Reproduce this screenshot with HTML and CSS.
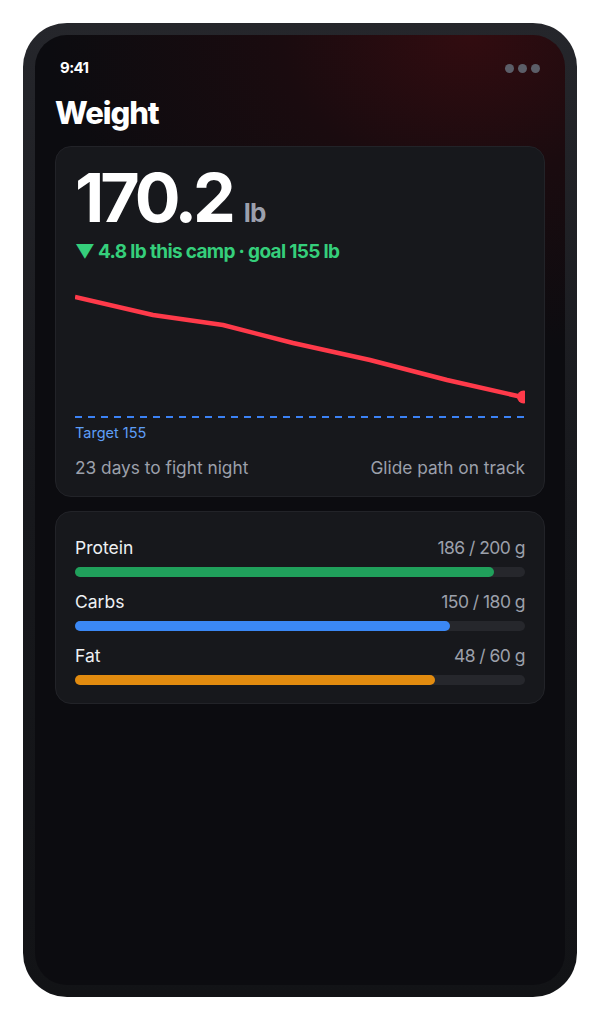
FILE: index.html
```html
<!DOCTYPE html>
<html lang="en">
  <head>
    <meta charset="UTF-8" />
    <meta name="viewport" content="width=device-width, initial-scale=1.0" />
    <title>Weight</title>
    <link rel="stylesheet" href="styles.css">
  </head>
  <body>
    <div class="phone">
      <div class="screen">
        <div class="status">
          <span class="time">9:41</span>
          <span class="dots"><i></i><i></i><i></i></span>
        </div>

        <h1>Weight</h1>

        <div class="card weight-card">
          <div class="reading">
            <span class="value">170.2</span>
            <span class="unit">lb</span>
          </div>
          <div class="delta">&#9660; 4.8 lb this camp &middot; goal 155 lb</div>

          <!-- weight trend vs. target line -->
          <svg class="chart" width="450" height="130" viewBox="0 0 450 130">
            <line x1="0" y1="127" x2="450" y2="127" stroke="#3b82f6" stroke-width="2" stroke-dasharray="7 6" />
            <polyline points="0,7 78,25 148,35 218,53 295,70 372,90 447,107" fill="none" stroke="#ff3a4a" stroke-width="4.5" stroke-linejoin="round" />
            <circle cx="448.5" cy="107" r="6.5" fill="#ff3a4a" />
          </svg>
          <div class="target">Target 155</div>

          <div class="foot">
            <span>23 days to fight night</span>
            <span>Glide path on track</span>
          </div>
        </div>

        <div class="card macros">
          <div class="macro">
            <div class="macro-head"><span class="name">Protein</span><span class="amount">186 / 200 g</span></div>
            <div class="track"><div class="fill protein" style="width: 93%"></div></div>
          </div>
          <div class="macro">
            <div class="macro-head"><span class="name">Carbs</span><span class="amount">150 / 180 g</span></div>
            <div class="track"><div class="fill carbs" style="width: 83.3%"></div></div>
          </div>
          <div class="macro">
            <div class="macro-head"><span class="name">Fat</span><span class="amount">48 / 60 g</span></div>
            <div class="track"><div class="fill fat" style="width: 80%"></div></div>
          </div>
        </div>
      </div>
    </div>
  </body>
</html>
```

FILE: styles.css
```css
body {
  font-family: Inter, "Noto Sans", sans-serif;
  background-color: #ffffff;
  margin: 0;
  padding: 0;
}

.phone {
  margin: 23px;
  width: 554px;
  height: 974px;
  box-sizing: border-box;
  padding: 12px;
  border-radius: 44px;
  background: linear-gradient(180deg, #25262b 0%, #17181c 50%, #121316 100%);
}

.screen {
  height: 100%;
  border-radius: 32px;
  overflow: hidden;
  padding: 0 20px;
  box-sizing: border-box;
  background:
    radial-gradient(ellipse 420px 320px at 82% 0%, rgba(52, 12, 16, 0.95) 0%, rgba(40, 10, 14, 0.5) 45%, rgba(13, 13, 17, 0) 100%),
    #0c0c10;
}

.status {
  display: flex;
  justify-content: space-between;
  align-items: center;
  padding: 24px 5px 0 5px;
  height: 18px;
}

.time {
  color: #fff;
  font-size: 15px;
  font-weight: 700;
  line-height: 18px;
  letter-spacing: -0.04em;
}

.dots {
  display: flex;
  gap: 4px;
}

.dots i {
  width: 9px;
  height: 9px;
  border-radius: 50%;
  background-color: #5b5e68;
}

h1 {
  margin: 17px 0 14px 0;
  color: #fff;
  font-size: 31px;
  font-weight: 800;
  line-height: 38px;
  letter-spacing: -0.035em;
}

.card {
  background-color: #17181c;
  border: 1px solid #222328;
  border-radius: 16px;
  padding: 16px 19px 17px 19px;
}

.reading {
  display: flex;
  align-items: baseline;
  gap: 12px;
  line-height: 1;
}

.value {
  color: #fff;
  font-size: 68px;
  font-weight: 700;
  letter-spacing: -0.06em;
}

.unit {
  color: #9ca0ad;
  font-size: 26px;
  font-weight: 700;
  letter-spacing: -0.03em;
}

.delta {
  margin-top: 9px;
  color: #35cf7b;
  font-size: 19px;
  font-weight: 700;
  line-height: 24px;
  letter-spacing: -0.035em;
}

.chart {
  display: block;
  margin-top: 26px;
}

.target {
  margin-top: 4px;
  color: #5e9ef7;
  font-size: 14.5px;
  line-height: 18px;
}

.foot {
  display: flex;
  justify-content: space-between;
  margin-top: 15px;
  color: #9ca0ab;
  font-size: 17.3px;
  line-height: 22px;
}

.macros {
  margin-top: 14px;
  padding: 25px 19px 18px 19px;
  display: flex;
  flex-direction: column;
  gap: 14px;
}

.macro-head {
  display: flex;
  justify-content: space-between;
  font-size: 17.5px;
  line-height: 22px;
}

.name {
  color: #eef0f3;
}

.amount {
  color: #9ca0ab;
  letter-spacing: -0.03em;
}

.track {
  margin-top: 8px;
  height: 10px;
  border-radius: 5px;
  background-color: #26272c;
}

.fill {
  height: 100%;
  border-radius: 5px;
}

.fill.protein {
  background-color: #20a05b;
}

.fill.carbs {
  background-color: #3b88f5;
}

.fill.fat {
  background-color: #e28b0f;
}
```
